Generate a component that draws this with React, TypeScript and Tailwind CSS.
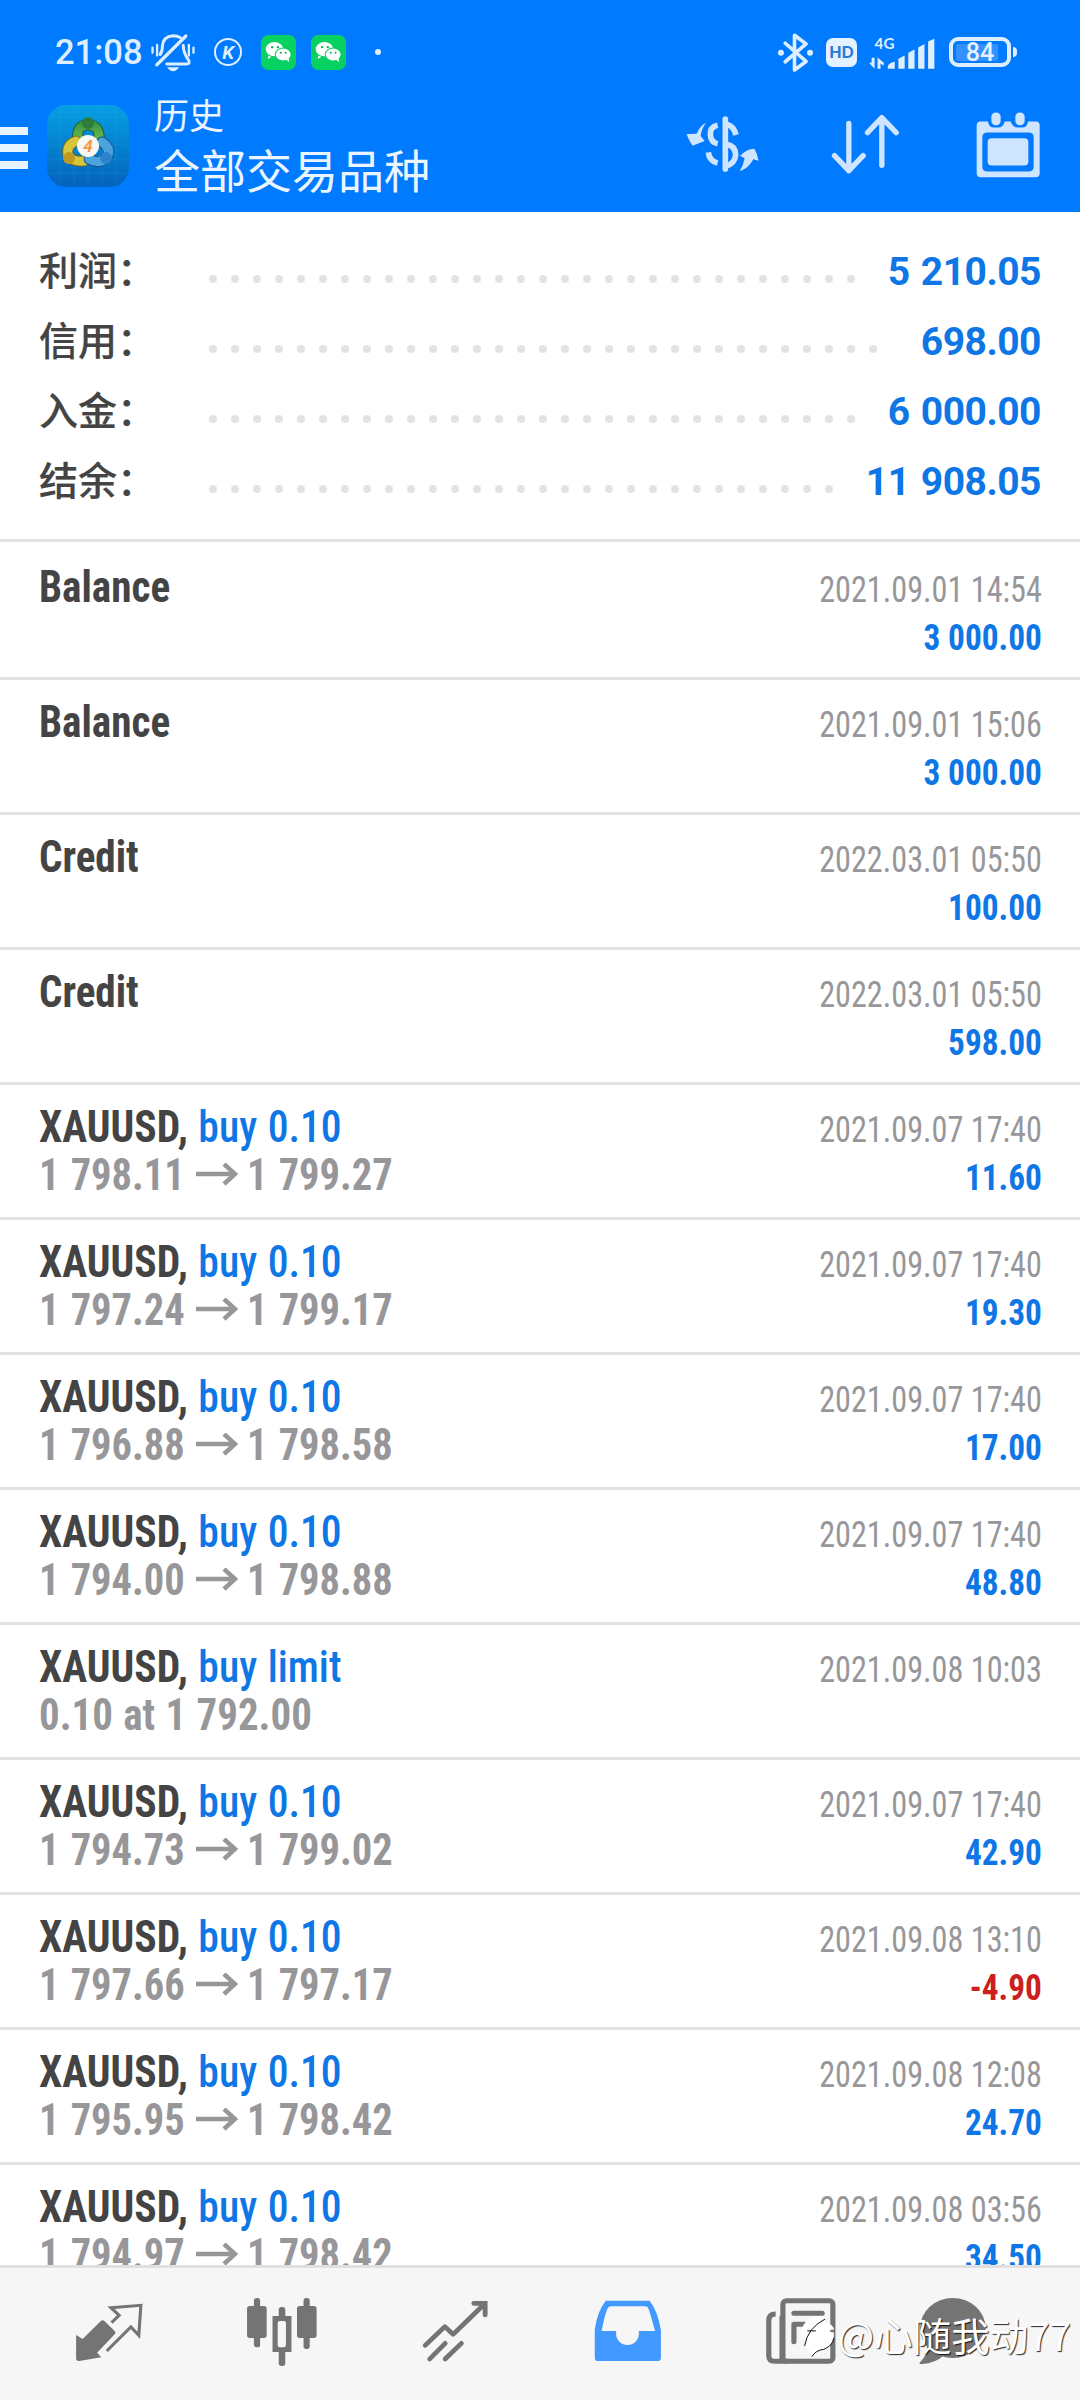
import type { ReactNode } from "react";

const summary = [
  { label: "利润：", value: "5 210.05", dots: 30 },
  { label: "信用：", value: "698.00", dots: 31 },
  { label: "入金：", value: "6 000.00", dots: 30 },
  { label: "结余：", value: "11 908.05", dots: 29 },
];

interface Deal {
  name: string;
  action?: string;
  from?: string;
  to?: string;
  note?: string;
  time: string;
  amount?: string;
}

const deals: Deal[] = [
  { name: "Balance", time: "2021.09.01 14:54", amount: "3 000.00" },
  { name: "Balance", time: "2021.09.01 15:06", amount: "3 000.00" },
  { name: "Credit", time: "2022.03.01 05:50", amount: "100.00" },
  { name: "Credit", time: "2022.03.01 05:50", amount: "598.00" },
  { name: "XAUUSD,", action: "buy 0.10", from: "1 798.11", to: "1 799.27", time: "2021.09.07 17:40", amount: "11.60" },
  { name: "XAUUSD,", action: "buy 0.10", from: "1 797.24", to: "1 799.17", time: "2021.09.07 17:40", amount: "19.30" },
  { name: "XAUUSD,", action: "buy 0.10", from: "1 796.88", to: "1 798.58", time: "2021.09.07 17:40", amount: "17.00" },
  { name: "XAUUSD,", action: "buy 0.10", from: "1 794.00", to: "1 798.88", time: "2021.09.07 17:40", amount: "48.80" },
  { name: "XAUUSD,", action: "buy limit", note: "0.10 at 1 792.00", time: "2021.09.08 10:03" },
  { name: "XAUUSD,", action: "buy 0.10", from: "1 794.73", to: "1 799.02", time: "2021.09.07 17:40", amount: "42.90" },
  { name: "XAUUSD,", action: "buy 0.10", from: "1 797.66", to: "1 797.17", time: "2021.09.08 13:10", amount: "-4.90" },
  { name: "XAUUSD,", action: "buy 0.10", from: "1 795.95", to: "1 798.42", time: "2021.09.08 12:08", amount: "24.70" },
  { name: "XAUUSD,", action: "buy 0.10", from: "1 794.97", to: "1 798.42", time: "2021.09.08 03:56", amount: "34.50" },
];

/* ── Status bar ── */

function MutedBell() {
  return (
    <svg viewBox="450 38 138 118" className="h-[39px] w-[46px]" fill="none" stroke="#DDEEFF" strokeWidth="9" strokeLinecap="round">
      <path d="M558 47 L470 134" strokeWidth="10" />
      <path d="M480 103 Q487 94 487 78 Q489 48 519 46 Q533 46 541 52" />
      <path d="M550 76 Q550 98 567 122 Q571 132 560 132 H500" />
      <path d="M501 142 Q519 166 538 142 Z" fill="#DDEEFF" stroke="none" />
      <path d="M457 82 V98 M471 74 V106 M567 74 V106 M581 82 V98" strokeWidth="7" />
    </svg>
  );
}

function WeChat() {
  return (
    <svg viewBox="0 0 104 104" className="size-[35px]">
      <rect width="104" height="104" rx="22" fill="#07D160" />
      <path d="M22 61 L20 71 L31 65 Z" fill="#fff" />
      <ellipse cx="40" cy="42" rx="26" ry="21" fill="#fff" />
      <ellipse cx="66" cy="58" rx="25" ry="21" fill="#07D160" />
      <ellipse cx="66" cy="58" rx="22" ry="18" fill="#fff" />
      <path d="M73 73 L84 80 L82 69 Z" fill="#fff" />
      <g fill="#07B050">
        <circle cx="33" cy="36" r="3.5" />
        <circle cx="50" cy="36" r="3.5" />
        <circle cx="59" cy="53" r="3" />
        <circle cx="73" cy="53" r="3" />
      </g>
    </svg>
  );
}

function Bluetooth() {
  return (
    <svg viewBox="350 36 110 118" className="h-[39px] w-[37px]" fill="none" stroke="#DDEEFF" strokeWidth="11" strokeLinecap="round" strokeLinejoin="round">
      <path d="M374 67 L437 122 L402 148 V43 L437 69 L374 123" />
      <circle cx="361" cy="96" r="9" fill="#DDEEFF" stroke="none" />
      <circle cx="449" cy="96" r="9" fill="#DDEEFF" stroke="none" />
    </svg>
  );
}

function Signal() {
  return (
    <svg viewBox="624 40 204 106" className="h-[35px] w-[68px]" fill="#DDEEFF">
      <text x="643" y="81" fontSize="46" fontFamily="Lato, Roboto, sans-serif" fontWeight="700">4G</text>
      <path d="M634 109 H643 V142 L626 124 H634 Z M652 142 V108 L671 124 V132 L661 127 V142 Z" />
      <path d="M683 142 V134 Q690 122 704 121 V142 Z" />
      <path d="M715 142 V112 L734 102 V142 Z M745 142 V94 L764 84 V142 Z M775 142 V78 L794 67 V142 Z M805 142 V60 L824 51 V142 Z" />
    </svg>
  );
}

function StatusBar() {
  return (
    <div className="flex h-[104px] items-center justify-between pr-[63px] pl-[55px]">
      <div className="flex items-center">
        <span className="w-[95px] text-[34.5px] leading-none font-medium text-[#DDEEFF]">21:08</span>
        <MutedBell />
        <span className="ml-[18px] flex size-[28px] items-center justify-center rounded-full border-2 border-[#DDEEFF] text-[19px] leading-none font-bold text-[#DDEEFF] italic">
          K
        </span>
        <div className="ml-[19px] flex gap-[15px]">
          <WeChat />
          <WeChat />
        </div>
        <span className="ml-[29px] size-[6px] rounded-full bg-[#DDEEFF]" />
      </div>
      <div className="flex items-center">
        <Bluetooth />
        <span className="ml-[12px] flex h-[29px] w-[31px] items-center justify-center rounded-[7px] bg-[#E4F1FF] font-[Lato] text-[16px] leading-none font-black text-[#2A7BD8]">
          HD
        </span>
        <div className="ml-[11px]">
          <Signal />
        </div>
        <div className="ml-[13px] flex h-[30px] w-[62px] items-center rounded-[9px] border-4 border-[#DDEEFF] pl-[3px]">
          <span className="flex h-[17px] w-[42px] items-center justify-center rounded-[2px] bg-[#3390FF] pl-[6px] text-[25px] leading-none font-medium text-[#E6F2FF]">
            84
          </span>
        </div>
        <span className="ml-[2px] h-[10px] w-[4px] rounded-r-full bg-[#DDEEFF]" />
      </div>
    </div>
  );
}

/* ── Title bar ── */

function AppLogo() {
  return (
    <svg viewBox="0 0 82 82" className="size-[82px] shrink-0">
      <defs>
        <linearGradient id="tile" x1="0" y1="0" x2="0" y2="1">
          <stop offset="0" stopColor="#06A0E4" />
          <stop offset="1" stopColor="#0462BC" />
        </linearGradient>
        <linearGradient id="green" x1="0" y1="0" x2="0" y2="1">
          <stop offset="0" stopColor="#3F9A48" />
          <stop offset="1" stopColor="#6CB84C" />
        </linearGradient>
      </defs>
      <rect width="82" height="82" rx="19" fill="url(#tile)" />
      <path d="M13 0 V82 M27 0 V82 M41 0 V82 M55 0 V82 M69 0 V82 M0 12 H82 M0 26 H82 M0 40 H82 M0 54 H82 M0 68 H82" stroke="#3BB4EE" strokeOpacity="0.16" />
      <g fill="none" strokeLinecap="round">
        <path d="M31 34 Q29 20 41 20 Q53 20 52 34" stroke="#1D5B34" strokeWidth="11" />
        <path d="M31 34 Q29 20 41 20 Q53 20 52 34" stroke="url(#green)" strokeWidth="9" />
        <path d="M29 36 Q19 40 21 50 Q24 57 37 56" stroke="#6E6A1C" strokeWidth="11" />
        <path d="M29 36 Q19 40 21 50 Q24 57 37 56" stroke="#D8C63A" strokeWidth="9" />
        <path d="M55 37 Q65 44 60 52 Q53 60 42 54" stroke="#14548E" strokeWidth="11" />
        <path d="M55 37 Q65 44 60 52 Q53 60 42 54" stroke="#4BA3DC" strokeWidth="9" />
      </g>
      <circle cx="41" cy="18" r="6" fill="#2E7D3A" />
      <circle cx="22" cy="53" r="6" fill="#C09A20" />
      <circle cx="59" cy="53" r="6" fill="#2C83CB" />
      <circle cx="41" cy="41" r="11" fill="#F8F6F2" />
      <text x="41" y="47" textAnchor="middle" fontSize="17" fontFamily="Roboto, sans-serif" fontWeight="700" fontStyle="italic" fill="#EF9A4A">4</text>
    </svg>
  );
}

function CurrencyIcon() {
  return (
    <svg viewBox="76 286 222 174" className="h-[58px] w-[74px]" fill="#CFE4FF">
      <path d="M136 309 Q118 318 108 342 L78 343 Q86 366 96 378 L132 364 L120 349 Q122 328 136 309 Z" />
      <path d="M237 455 Q248 438 252 415 L238 409 Q256 388 281 387 Q290 402 294 423 L278 419 Q264 446 237 455 Z" />
      <g fill="none" stroke="#CFE4FF" strokeWidth="17">
        <path d="M194 298 V448" strokeLinecap="round" />
        <path d="M171 317 Q148 322 149 344 Q150 368 171 372" />
        <path d="M143 398 Q146 424 171 430" />
        <path d="M198 314 Q220 320 226 346" />
        <path d="M198 374 Q224 378 225 406 Q222 432 198 438" />
      </g>
    </svg>
  );
}

function SortIcon() {
  return (
    <svg viewBox="513 286 206 180" className="h-[60px] w-[69px]" fill="none" stroke="#CFE4FF" strokeWidth="16" strokeLinecap="round" strokeLinejoin="round">
      <path d="M566 314 V456 M523 411 L566 456 L609 411" />
      <path d="M665 440 V297 M622 342 L665 297 L708 342" />
    </svg>
  );
}

function CalendarIcon() {
  return (
    <svg viewBox="948 275 192 200" className="h-[67px] w-[64px]" fill="#CFE4FF">
      <rect x="994" y="279" width="28" height="38" rx="13" />
      <rect x="1066" y="279" width="28" height="38" rx="13" />
      <path
        fillRule="evenodd"
        d="M962 306 H984 Q986 324 1002 324 H1014 Q1030 324 1034 306 H1052 Q1058 324 1074 324 H1086 Q1102 324 1104 306 H1127 Q1139 306 1139 318 V461 Q1139 473 1127 473 H962 Q950 473 950 461 V318 Q950 306 962 306 Z M982 339 Q967 339 967 353 V441 Q967 456 982 456 H1106 Q1121 456 1121 441 V353 Q1121 339 1106 339 Z"
      />
      <rect x="983" y="356" width="122" height="82" rx="12" />
    </svg>
  );
}

function TitleBar() {
  return (
    <div className="flex h-[84px] items-center pr-[40px]">
      <div className="mt-[3px] mr-[19px] flex w-[28px] flex-col gap-[9px]">
        <span className="h-[8px] bg-[#E8F4FF]" />
        <span className="h-[8px] bg-[#E8F4FF]" />
        <span className="h-[8px] bg-[#E8F4FF]" />
      </div>
      <AppLogo />
      <div className="mb-[3px] ml-[25px] flex-1 font-['Noto_Sans_CJK_SC'] text-[#EAF5FF]">
        <h2 className="h-[47px] text-[35px] leading-[47px]">历史</h2>
        <h1 className="h-[63px] text-[46px] leading-[62px]">全部交易品种</h1>
      </div>
      <div className="mb-[4px] flex items-center">
        <CurrencyIcon />
        <span className="ml-[71px]">
          <SortIcon />
        </span>
        <span className="ml-[76px]">
          <CalendarIcon />
        </span>
      </div>
    </div>
  );
}

/* ── Account summary ── */

function SummaryRow({ label, value, dots }: { label: string; value: string; dots: number }) {
  return (
    <div className="flex h-[70px] items-center">
      <span className="mb-[5px] w-[170px] font-['Noto_Sans_CJK_SC'] text-[39px] font-medium text-[#444] [-webkit-text-stroke:0.2px_#444]">
        {label}
      </span>
      <div className="mt-[16px] flex gap-[14px]">
        {Array.from({ length: dots }, (_, i) => (
          <span key={i} className="size-[8px] rounded-full bg-[#E3E3E3]" />
        ))}
      </div>
      <span className="mt-[2px] ml-auto text-[39px] font-bold tracking-[-0.5px] text-[#0F76E6] [word-spacing:2px]">{value}</span>
    </div>
  );
}

/* ── Deal list ── */

function DealRow({ deal }: { deal: Deal }) {
  const loss = deal.amount?.startsWith("-");
  return (
    <li className="flex h-[135px] shrink-0 justify-between border-t-[3px] border-[#E3E3E3] pt-[18px] pr-[38px] pl-[39px] font-['Roboto_Condensed'] first:border-white">
      <div className="text-[44px] leading-[48px]">
        <p className={`origin-left text-[#444] ${deal.action ? "scale-x-[0.945]" : "scale-x-[0.935]"}`}>
          <span className="font-bold">{deal.name}</span>
          {deal.action && <span className="font-medium text-[#0F76E6] [word-spacing:1px]"> {deal.action}</span>}
        </p>
        {deal.from && (
          <p className="flex items-center font-bold text-[#97979A]">
            <span className="w-[157px] origin-left scale-x-[0.92] whitespace-nowrap [word-spacing:2px]">{deal.from}</span>
            <svg viewBox="0 0 42 24" className="mr-[9px] h-[24px] w-[42px]" fill="none" stroke="#97979A" strokeWidth="4.5">
              <path d="M0 11 H39 M28 1 L39 11 L28 21" />
            </svg>
            <span className="origin-left scale-x-[0.92] [word-spacing:2px]">{deal.to}</span>
          </p>
        )}
        {deal.note && <p className="origin-left scale-x-[0.93] font-bold text-[#97979A] [word-spacing:1px]">{deal.note}</p>}
      </div>
      <div className="pt-[3px] text-right text-[36px] leading-[48px]">
        <p className="origin-right scale-x-[0.895] text-[#97979A]">{deal.time}</p>
        <p className={`origin-right scale-x-[0.925] font-bold ${loss ? "text-[#CC1F1F]" : "text-[#0F76E6]"}`}>{deal.amount}</p>
      </div>
    </li>
  );
}

/* ── Bottom navigation ── */

function NavIcon({ viewBox, children }: { viewBox: string; children: ReactNode }) {
  return (
    <span className="flex w-[173px] justify-center last:w-[132px]">
      <svg viewBox={viewBox} preserveAspectRatio="none" className="h-[70px] w-[72px]" fill="#747474" stroke="#747474" strokeWidth="0" strokeLinecap="round" strokeLinejoin="round">
        {children}
      </svg>
    </span>
  );
}

function BottomNav() {
  return (
    <nav className="relative h-[135px] border-t-[3px] border-[#E0E0E2] bg-[#F6F6F6]">
      <div className="flex pt-[29px] pl-[22px]">
        <NavIcon viewBox="210 441 209 210">
          <path d="M219 555 L238 567 L291 513 Q296 508 301 513 L331 543 Q336 548 331 553 L280 608 L292 622 L228 633 Q219 634 219 625 Z" />
          <path fill="none" strokeWidth="9" strokeLinecap="butt" strokeLinejoin="miter" d="M322 518 L344 496 L320 473 L407 466 L401 556 L378 531 L308 603" />
        </NavIcon>
        <NavIcon viewBox="712 441 209 210">
          <rect x="715" y="468" width="57" height="96" rx="8" />
          <rect x="735" y="444" width="18" height="148" rx="8" />
          <rect x="860" y="468" width="57" height="96" rx="8" />
          <rect x="879" y="444" width="18" height="153" rx="8" />
          <rect x="807" y="471" width="19" height="36" rx="8" />
          <rect x="807" y="596" width="19" height="52" rx="8" />
          <path fillRule="evenodd" d="M789 498 H844 V606 H789 Z M810 513 Q804 513 804 519 V585 Q804 592 810 592 H822 Q828 592 828 585 V519 Q828 513 822 513 Z" />
        </NavIcon>
        <NavIcon viewBox="1214 441 209 210">
          <g fill="none" strokeWidth="14">
            <path d="M1232 586 L1289 530 L1313 553 L1404 462" />
            <path d="M1373 460 H1406 V495" strokeLinejoin="miter" />
            <path d="M1245 627 L1290 580 M1290 627 L1337 580" />
          </g>
        </NavIcon>
        <NavIcon viewBox="150 441 209 210">
          <path
            fill="#4299FF"
            fillRule="evenodd"
            d="M190 452 H317 Q340 480 350 540 V623 Q350 633 340 633 H168 Q158 633 158 623 V540 Q165 483 190 452 Z M205 469 Q197 470 195 476 Q185 500 178 543 H220 V552 A33 33 0 0 0 286 552 V543 H333 Q322 500 314 476 Q312 469 303 469 Z"
          />
        </NavIcon>
        <NavIcon viewBox="654 441 209 210">
          <g fill="none" strokeWidth="15">
            <path d="M685 492 Q665 492 665 512 V618 Q665 634 682 634 H720" strokeLinecap="butt" />
            <path d="M699 500 V630" strokeWidth="6" />
            <rect x="706" y="452" width="145" height="182" rx="10" />
            <path d="M738 490 H820 M738 523 H770 M738 523 V575" />
            <path d="M790 523 H820 M790 547 H820" strokeWidth="10" />
          </g>
        </NavIcon>
        <NavIcon viewBox="1096 441 209 210">
          <ellipse cx="1200" cy="534" rx="95" ry="90" />
          <path d="M1125 580 Q1128 615 1104 638 Q1100 643 1110 642 Q1150 640 1175 615 Z" />
        </NavIcon>
      </div>

      {/* Author mark over the tab icons */}
      <div className="absolute top-[41px] right-[9px] flex items-center text-white [text-shadow:1px_1px_1px_rgba(0,0,0,0.85)]">
        <svg viewBox="112 120 106 130" className="mt-[5px] h-[43px] w-[35px]">
          <path d="M116 170 Q124 130 164 124 Q182 120 192 130 Q176 132 172 138 Q208 140 216 164 Q196 166 190 170 L214 172 Q218 206 190 220 Q162 228 150 248 L148 232 Q124 224 128 190 Q110 192 116 170 Z" fill="#fff" />
          <path d="M126 214 Q134 160 188 132 M134 168 H160 M148 246 Q160 226 184 224 Q212 212 214 190" fill="none" stroke="#111" strokeWidth="3" />
        </svg>
        <span className="ml-[3px] font-['Noto_Sans_CJK_SC'] text-[38.5px] leading-[50px] whitespace-nowrap">@心随我动77</span>
      </div>
    </nav>
  );
}

export default function App() {
  return (
    <div className="flex h-[2400px] w-[1080px] flex-col overflow-hidden bg-white font-[Roboto]">
      <header className="h-[212px] shrink-0 bg-[#007AFF]">
        <StatusBar />
        <TitleBar />
      </header>

      <section className="h-[330px] shrink-0 border-b-[3px] border-[#E3E3E3] px-[39px] pt-[24px]">
        {summary.map((row) => (
          <SummaryRow key={row.label} {...row} />
        ))}
      </section>

      <ul className="flex min-h-0 flex-1 flex-col overflow-hidden">
        {deals.map((deal, i) => (
          <DealRow key={i} deal={deal} />
        ))}
      </ul>

      <BottomNav />
    </div>
  );
}
